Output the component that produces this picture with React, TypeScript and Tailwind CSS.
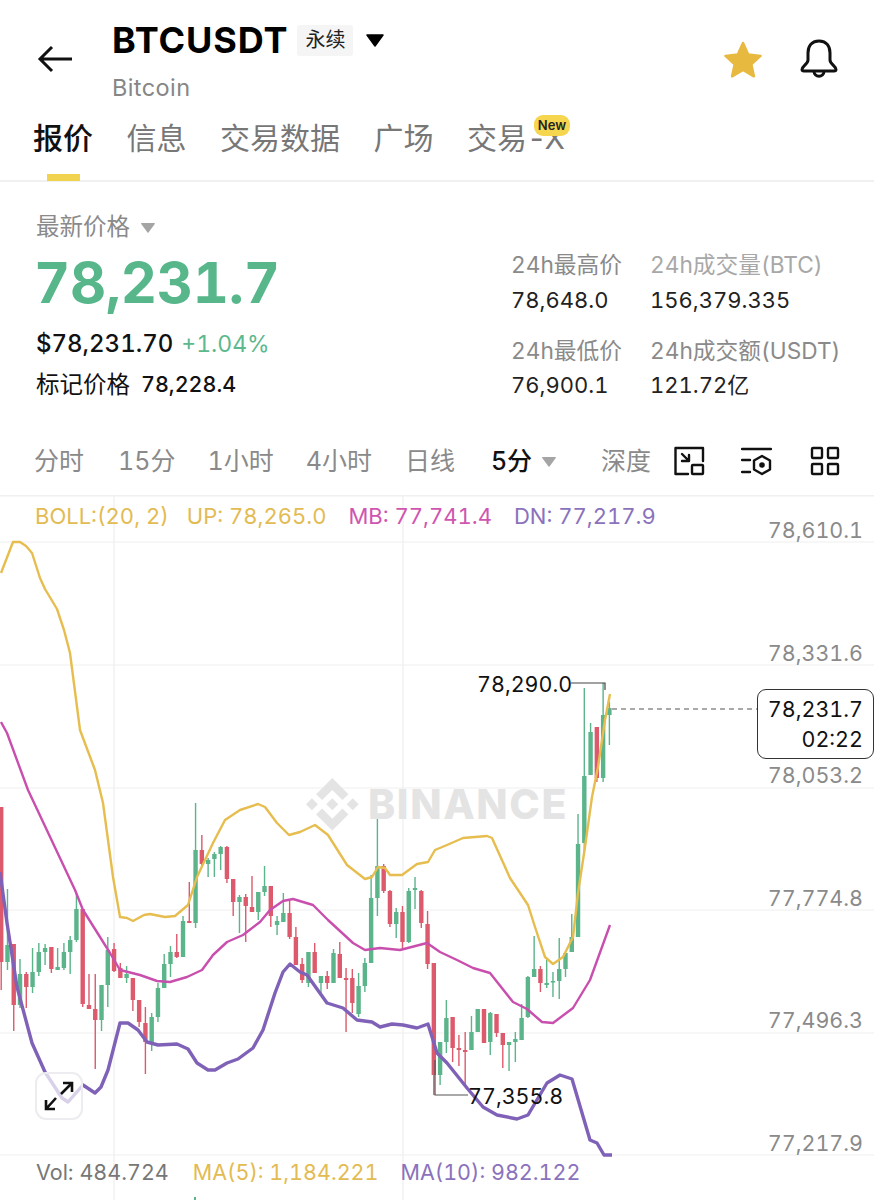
import React from "react";

type C = [number, number, number, number, number];
// [wickTop, wickBottom, bodyTop, bodyBottom, 1=red 0=green]
const candles: C[] = [
  [807,990,807,962,1],[889,970,945,962,0],[944,1031,944,1005,1],[959,1008,974,1005,0],[972,1008,974,987,1],
  [948,993,972,987,0],[943,976,952,972,0],[944,965,948,952,0],[947,973,947,969,1],[948,970,967,970,0],
  [943,970,952,968,0],[936,974,940,952,0],[893,942,909,940,0],[909,1007,909,1004,1],[974,1009,1005,1009,1],
  [974,1069,1009,1020,1],[985,1031,985,1020,0],[937,1007,950,985,0],[943,972,949,971,1],[963,978,968,978,1],
  [966,983,974,978,0],[978,1011,978,1000,1],[1000,1027,1000,1022,1],[1007,1074,1023,1042,1],[1013,1051,1017,1042,0],
  [983,1022,988,1017,0],[954,988,964,988,0],[946,977,952,964,0],[934,958,952,957,1],[916,957,921,957,0],
  [882,923,921,923,1],[803,928,850,923,0],[835,867,850,864,1],[858,877,860,864,0],[852,877,854,859,0],
  [846,870,847,854,0],[846,883,847,879,1],[879,916,879,902,1],[895,933,897,902,0],[894,942,897,906,1],
  [876,912,907,912,1],[892,920,892,912,0],[866,896,886,892,0],[886,927,886,916,1],[916,935,921,925,0],
  [893,922,913,922,0],[900,939,913,937,1],[927,965,937,965,1],[958,983,964,980,1],[952,987,952,983,0],
  [943,973,952,973,1],[976,993,976,983,0],[971,989,976,983,1],[949,983,953,983,0],[942,978,954,978,1],
  [968,1032,978,980,1],[969,1013,978,1003,1],[973,1017,986,1014,0],[958,992,963,986,0],[875,963,898,963,0],
  [817,916,866,898,0],[864,893,866,891,1],[890,927,891,924,1],[908,938,912,924,0],[906,949,912,942,1],
  [888,943,891,942,0],[877,909,888,890,0],[890,928,891,923,1],[911,969,924,964,1],[963,1095,963,1075,1],
  [1042,1085,1042,1075,0],[1000,1053,1018,1042,0],[1017,1062,1017,1048,1],[1035,1066,1048,1050,1],[1032,1087,1050,1052,1],
  [1016,1050,1032,1050,0],[1009,1032,1009,1032,0],[1009,1043,1009,1043,1],[1012,1055,1013,1042,0],[1014,1037,1014,1033,1],
  [1033,1068,1033,1045,1],[1042,1071,1042,1045,0],[1032,1062,1039,1042,0],[1004,1040,1018,1040,0],[976,1018,977,1017,0],
  [936,977,969,977,0],[966,992,969,983,1],[959,988,983,985,0],[972,997,981,982,0],[938,999,969,981,0],
  [953,977,953,969,0],[914,952,937,952,0],[814,937,844,937,0],[688,854,776,843,0],[723,775,732,775,0],
  [727,782,727,778,1],[683,782,715,778,0],[702,745,708,715,0],
];

const up = "1,573 13,542 20,542 26,546 32,553 40,578 45,589 57,609 64,630 70,653 80,730 95,770 103,803 113,877 120,917 127,918 133,921 144,915 150,914 165,917 175,916 188,905 197,877 205,860 213,843 225,820 240,810 258,804 265,807 277,823 289,835 300,832 315,825 328,835 347,865 365,879 372,877 378,867 385,868 390,875 402,875 417,864 428,862 435,850 447,845 463,838 487,836 492,838 510,878 528,905 535,927 545,957 553,964 563,957 573,937 578,893 585,847 592,797 598,767 605,720 610,694";
const mb = "1,722 7,733 28,790 75,890 83,910 100,937 110,953 120,970 128,972 140,975 157,981 170,982 187,977 202,970 213,955 227,942 243,935 260,922 270,910 283,901 293,899 313,905 328,920 353,943 365,950 380,948 400,950 427,943 440,952 457,960 473,968 490,973 513,1002 527,1009 542,1022 553,1023 573,1008 590,980 610,925";
const dn = "0,872 7,923 17,987 32,1043 45,1072 62,1098 68,1102 83,1085 95,1093 101,1087 108,1070 120,1023 128,1023 138,1030 147,1042 158,1045 177,1044 188,1049 197,1063 208,1070 215,1070 227,1063 238,1059 253,1048 263,1030 275,993 283,972 290,964 300,972 307,975 327,1003 343,1008 357,1020 372,1022 380,1027 392,1024 403,1025 417,1028 428,1024 437,1053 447,1063 467,1088 483,1107 497,1115 517,1119 528,1115 547,1083 560,1075 572,1079 590,1140 597,1143 604,1155 612,1155";

const GREEN = "#5bb48a";
const RED = "#dd5a6c";

function ChartDrawing() {
  return (
    <svg className="absolute left-0 top-0" width={874} height={705} viewBox="0 495 874 705">
      <line x1={0} x2={874} y1={495.5} y2={495.5} stroke="#f0f0f0" strokeWidth={2} />
      <g stroke="#efefef" strokeWidth={1.2}>
        {[542, 665, 788, 910, 1033, 1155].map((y) => (
          <line key={y} x1={0} x2={874} y1={y} y2={y} />
        ))}
        {[114, 403].map((x) => (
          <line key={x} x1={x} x2={x} y1={495} y2={1200} />
        ))}
      </g>
      <g transform="translate(306 778) scale(0.415)" fill="#e4e4e4">
        <path d="M38.73 53.2l24.59-24.58 24.6 24.6 14.3-14.31L63.32 0 24.43 38.9zM0 63.31l14.3-14.31 14.31 14.31-14.31 14.3zM38.73 73.41l24.59 24.59 24.6-24.6 14.31 14.29-38.9 38.91-38.91-38.88-.02-.02zM98.28 63.31l14.3-14.31 14.31 14.3-14.31 14.32zM77.83 63.3L63.32 48.78 52.59 59.51l-1.24 1.23-2.54 2.54 14.51 14.5 14.51-14.47z" />
      </g>
      {candles.map((c, i) => {
        const x = 1.2 + 6.27 * i;
        const col = c[4] ? RED : GREEN;
        return (
          <g key={i} fill={col}>
            <rect x={x - 0.7} y={c[0]} width={1.4} height={c[1] - c[0]} />
            <rect x={x - 2.2} y={c[2]} width={4.4} height={Math.max(c[3] - c[2], 1.5)} />
          </g>
        );
      })}
      <rect x={194} y={1197} width={2} height={3} fill={GREEN} />
      <polyline points={up} fill="none" stroke="#e6bd4e" strokeWidth={2.4} strokeLinejoin="round" />
      <polyline points={mb} fill="none" stroke="#c94fae" strokeWidth={2.4} strokeLinejoin="round" />
      <polyline points={dn} fill="none" stroke="#7f62b8" strokeWidth={3.4} strokeLinejoin="round" />
      <path d="M571 683H605V690" fill="none" stroke="#444" strokeWidth={1.2} />
      <path d="M435 1060V1095H468" fill="none" stroke="#555" strokeWidth={1.2} />
      <line x1={612} x2={757} y1={709} y2={709} stroke="#555" strokeWidth={1.2} strokeDasharray="5 4" />
    </svg>
  );
}

function Caret({ cls }: { cls: string }) {
  return (
    <svg className={cls} viewBox="0 0 20 14">
      <path d="M2 2h16l-8 11z" fill="currentColor" stroke="currentColor" strokeWidth={1.5} strokeLinejoin="round" />
    </svg>
  );
}

export default function App() {
  return (
    <div className="relative flex h-[1200px] w-[874px] flex-col overflow-hidden bg-white font-['Inter','Noto_Sans_CJK_SC',sans-serif] text-[#1a1a1a] tabular-nums">
      {/* header */}
      <div className="flex h-[112px] shrink-0 pl-[37px] pr-[36px]">
        <svg className="mt-[45px] h-[28px] w-[36px] shrink-0" viewBox="0 0 36 28" fill="none" stroke="#111" strokeWidth={3}>
          <path d="M35 14H4M15 2L3 14l12 12" />
        </svg>
        <div className="ml-[39px] flex flex-col">
          <div className="mt-[20px] flex h-[40px] items-center">
            <span className="text-[36px] font-bold leading-none tracking-[0.9px] text-black">BTCUSDT</span>
            <span className="ml-[9px] flex h-[31px] w-[56px] items-center justify-center rounded-[3px] bg-[#f5f5f5] text-[20px] leading-none text-[#222]">永续</span>
            <Caret cls="ml-[12px] h-[14px] w-[20px] text-black" />
          </div>
          <span className="mt-[15px] text-[23.5px] leading-[26px] tracking-[0.4px] text-[#868686]">Bitcoin</span>
        </div>
        <div className="ml-auto mt-[38px] flex h-[42px] items-center gap-[37px]">
          <svg className="h-[38px] w-[40px]" viewBox="0 0 40 38">
            <path d="M20 3l5.2 11.6 12.3 1.3-9.2 8.3 2.6 12.1L20 30l-10.9 6.3 2.6-12.1-9.2-8.3 12.3-1.3z" fill="#e8b93f" stroke="#e8b93f" strokeWidth={2.5} strokeLinejoin="round" />
          </svg>
          <svg className="h-[40px] w-[38px]" viewBox="0 0 38 40" fill="none" stroke="#111" strokeWidth={3}>
            <path d="M19 2C11 2 8 8 8 14V21C8 25 2 27 2 30.5C2 31.5 3 32 4 32H34C35 32 36 31.5 36 30.5C36 27 30 25 30 21V14C30 8 27 2 19 2Z" />
            <path d="M14 32C14 39 24 39 24 32" />
          </svg>
        </div>
      </div>

      {/* tabs */}
      <div className="relative flex h-[70px] shrink-0 items-start gap-[33.500px] border-b-2 border-[#f0f0f0] pl-[33px] pt-[7px] text-[30px] leading-[38px] text-[#777]">
        <span className="relative font-medium text-[#111]">
          报价
          <span className="absolute left-[14px] top-[55px] h-[7px] w-[33px] bg-[#f2d34f]" />
        </span>
        <span>信息</span>
        <span>交易数据</span>
        <span>广场</span>
        <span className="relative">
          交易<span className="tracking-[-2px]">-X</span>
          <span className="absolute left-[67px] top-[-4px] flex h-[21px] w-[36px] items-center justify-center rounded-[9px] bg-[#f5d64e] text-[13px] font-semibold leading-none text-[#222]">New</span>
        </span>
      </div>

      {/* stats */}
      <div className="flex h-[259px] shrink-0">
        <div className="flex w-[512px] flex-col pl-[36px]">
          <div className="mt-[30px] flex h-[30px] items-center text-[23.5px] text-[#8a8a8a]">
            最新价格
            <Caret cls="ml-[10px] h-[11px] w-[16px] text-[#a5a5a5]" />
          </div>
          <div className="-ml-[2px] mt-[11px] h-[60px] text-[56px] font-bold leading-[60px] tracking-[-0.2px] text-[#57b78b]">78,231.7</div>
          <div className="mt-[16px] flex h-[30px] items-center text-[24px] font-medium leading-none text-[#111]">
            $78,231.70
            <span className="ml-[8px] text-[23px] font-normal text-[#5cb98e]">+1.04%</span>
          </div>
          <div className="mt-[11px] flex h-[30px] items-center text-[23.5px] leading-none text-[#111]">
            标记价格
            <span className="ml-[11px] text-[21.5px] font-medium">78,228.4</span>
          </div>
        </div>
        <div className="-ml-[1px] mt-[68px] grid h-fit grid-cols-[139px_auto] text-[22.700px] leading-[30px]">
          <span className="text-[#8a8a8a]">24h最高价</span>
          <span className="text-[#a8a8a8]">24h成交量(BTC)</span>
          <span className="mt-[5px] text-[22px] text-[#222]">78,648.0</span>
          <span className="mt-[5px] text-[22px] text-[#222]">156,379.335</span>
          <span className="mt-[21px] text-[#8a8a8a]">24h最低价</span>
          <span className="mt-[21px] text-[#8a8a8a]">24h成交额(USDT)</span>
          <span className="mt-[4px] text-[22px] text-[#222]">76,900.1</span>
          <span className="mt-[4px] text-[22px] text-[#222]">121.72亿</span>
        </div>
      </div>

      {/* timeframes */}
      <div className="flex h-[54px] shrink-0 items-start pl-[34px] text-[25px] leading-[40px] text-[#8a8a8a]">
        <span>分时</span>
        <span className="ml-[34px]">15分</span>
        <span className="ml-[32px]">1小时</span>
        <span className="ml-[32px]">4小时</span>
        <span className="ml-[33px]">日线</span>
        <span className="ml-[36px] font-medium text-[#111]">5分</span>
        <Caret cls="ml-[9px] mt-[15px] h-[11px] w-[16px] text-[#a5a5a5]" />
        <span className="ml-[44px]">深度</span>
        <svg className="ml-[23px] mt-[5px] h-[30px] w-[31px]" viewBox="0 0 31 30" fill="none" stroke="#111" strokeWidth={2.4} strokeLinecap="round" strokeLinejoin="round">
          <path d="M14 28H1.5V2H29V15" />
          <rect x={18} y={19} width={11} height={9} rx={0.8} />
          <path d="M8 8L15 15M15 9V15H8" />
        </svg>
        <svg className="ml-[36px] mt-[6px] h-[30px] w-[31px]" viewBox="0 0 31 30" fill="none" stroke="#111" strokeWidth={2.4} strokeLinecap="round" strokeLinejoin="round">
          <path d="M1 2H30M1 13H9M1 25H9" />
          <path d="M21 9l8 4.5v9L21 27l-8-4.500v-9z" />
          <circle cx={21} cy={18} r={1.6} fill="#111" />
        </svg>
        <svg className="ml-[38px] mt-[5px] h-[30px] w-[30px]" viewBox="0 0 30 30" fill="none" stroke="#111" strokeWidth={2.4} strokeLinejoin="round">
          <rect x={2} y={2} width={10} height={10} rx={1} />
          <rect x={18} y={2} width={10} height={10} rx={1} />
          <rect x={2} y={18} width={10} height={10} rx={1} />
          <rect x={18} y={18} width={10} height={10} rx={1} />
        </svg>
      </div>

      {/* chart */}
      <div className="relative h-[705px] shrink-0 text-[21.500px] leading-[26px]">
        <ChartDrawing />

        <div className="absolute left-[368px] top-[284px] text-[41px] font-extrabold leading-[50px] tracking-[1.6px] text-[#e4e4e4]">BINANCE</div>

        <div className="absolute left-[35px] top-[8px] flex text-[22px]">
          <span className="text-[#e3bb53]">BOLL:(20, 2)</span>
          <span className="ml-[18px] text-[#e3bb53]">UP: 78,265.0</span>
          <span className="ml-[22px] text-[#cf55b0]">MB: 77,741.4</span>
          <span className="ml-[22px] text-[#8a72bd]">DN: 77,217.9</span>
        </div>

        <div className="absolute right-[11px] top-[22px] flex flex-col items-end text-[#8a8a8a]">
          <span className="h-[122.500px]">78,610.1</span>
          <span className="h-[122.500px]">78,331.6</span>
          <span className="h-[122.500px]">78,053.2</span>
          <span className="h-[122.500px]">77,774.8</span>
          <span className="h-[122.500px]">77,496.3</span>
          <span>77,217.9</span>
        </div>

        <div className="absolute left-[757px] top-[194px] flex h-[70px] w-[117px] flex-col items-end justify-center rounded-[9px] border border-[#333] bg-white pr-[10px] leading-[30px] text-[#111]">
          <span>78,231.7</span>
          <span>02:22</span>
        </div>

        <span className="absolute left-[477px] top-[176px] text-[#111]">78,290.0</span>
        <span className="absolute left-[468px] top-[588px] text-[#111]">77,355.8</span>

        <div className="absolute left-[35px] top-[577px] flex h-[48px] w-[48px] items-center justify-center rounded-[11px] border-2 border-[#ececf1] bg-white/70">
          <svg className="h-[32px] w-[32px]" viewBox="0 0 32 32" fill="none" stroke="#111" strokeWidth={2.6}>
            <path d="M18 14L29 3M20 3H29V12M13 18L3 29M3 20V29H12" />
          </svg>
        </div>

        <div className="absolute left-[36px] top-[664px] flex">
          <span className="text-[#777]">Vol: 484.724</span>
          <span className="ml-[24px] text-[#e3bb53]">MA(5): 1,184.221</span>
          <span className="ml-[22px] text-[#8a72bd]">MA(10): 982.122</span>
        </div>
      </div>
    </div>
  );
}
